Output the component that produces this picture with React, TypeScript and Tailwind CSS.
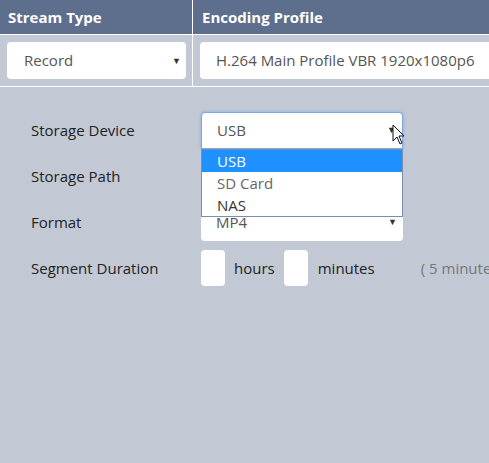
import React from 'react';

const font = { fontFamily: '"Open Sans", "Noto Sans", sans-serif' };

function Caret() {
  return <span className="text-[9px] text-[#333]">▼</span>;
}

function Field({ label, children }: { label: string; children: React.ReactNode }) {
  return (
    <div className="flex h-[46px] items-center">
      <div className="w-[201px] shrink-0 pl-[31px] text-[15px] text-[#222]">{label}</div>
      {children}
    </div>
  );
}

export default function App() {
  return (
    <div className="h-[463px] w-[489px] overflow-hidden bg-[#c2c9d4]" style={font}>
      {/* Header */}
      <div className="flex h-[35px] border-b border-white bg-[#5e6e8d] text-[15px] font-bold text-white">
        <div className="flex w-[193px] items-center border-r border-white pl-[8px]">Stream Type</div>
        <div className="flex flex-1 items-center pl-[9px]">Encoding Profile</div>
      </div>

      {/* Stream row */}
      <div className="flex h-[52px] border-b border-white">
        <div className="flex w-[193px] items-center border-r border-white pl-[7px] pr-[6px]">
          <div className="flex h-[37px] flex-1 items-center justify-between rounded-[4px] bg-white pl-[17px] pr-[5px] text-[15px] text-[#555]">
            <span>Record</span>
            <Caret />
          </div>
        </div>
        <div className="flex flex-1 items-center overflow-hidden pl-[7px]">
          <div className="flex h-[37px] flex-1 items-center whitespace-nowrap rounded-l-[4px] bg-white pl-[16px] text-[15px] text-[#555]">
            H.264 Main Profile VBR 1920x1080p6
          </div>
        </div>
      </div>

      {/* Form */}
      <div className="pt-[20px]">
        <Field label="Storage Device">
          <div className="relative">
            <div className="flex h-[37px] w-[202px] items-center justify-between rounded-t-[4px] border border-[#7ea6e0] bg-white pl-[15px] pr-[6px] text-[15px] text-[#555] shadow-[0_0_3px_#7ea6e0]">
              <span>USB</span>
              <Caret />
            </div>
            {/* Dropdown */}
            <div className="absolute left-0 top-[37px] z-10 w-[202px] border border-[#7a8fb0] bg-white text-[15px] leading-[22px]">
              <div className="bg-[#1e90ff] pl-[15px] text-white">USB</div>
              <div className="pl-[15px] text-[#666]">SD Card</div>
              <div className="pl-[15px] text-[#333]">NAS</div>
            </div>
            {/* Cursor */}
            <svg className="absolute left-[191px] top-[12px] z-20" width="14" height="22" viewBox="0 0 14 22">
              <path d="M1 1 L1 17 L5 13 L8 20 L10 19 L7 12 L12 12 Z" fill="white" stroke="#111" strokeWidth="1" strokeLinejoin="round" />
            </svg>
          </div>
        </Field>
        <Field label="Storage Path">
          <div className="h-[37px] w-[202px] rounded-[4px] bg-white" />
        </Field>
        <Field label="Format">
          <div className="flex h-[37px] w-[202px] items-center justify-between rounded-[4px] bg-white pl-[15px] pr-[6px] text-[15px] text-[#555]">
            <span>MP4</span>
            <Caret />
          </div>
        </Field>
        <Field label="Segment Duration">
          <div className="flex items-center whitespace-nowrap text-[15px]">
            <div className="h-[36px] w-[24px] shrink-0 rounded-[4px] bg-white" />
            <span className="ml-[9px] text-[#222]">hours</span>
            <div className="ml-[9px] h-[36px] w-[24px] shrink-0 rounded-[4px] bg-white" />
            <span className="ml-[10px] text-[#222]">minutes</span>
            <span className="ml-[46px] text-[#777]">( 5 minutes</span>
          </div>
        </Field>
      </div>
    </div>
  );
}
